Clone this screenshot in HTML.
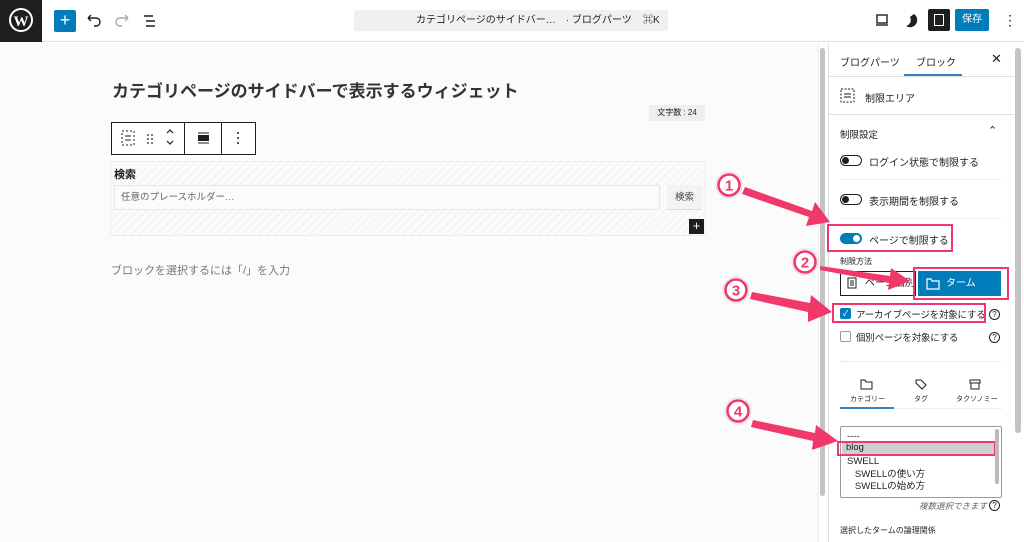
<!DOCTYPE html>
<html><head><meta charset="utf-8"><style>
*{box-sizing:border-box;margin:0;padding:0}
body{width:1024px;height:542px;overflow:hidden;background:#fff;font-family:"Liberation Sans","Noto Sans CJK JP",sans-serif;color:#1e1e1e;position:relative}
.a{position:absolute}
</style></head><body>
<div class="a" style="left:0;top:0;width:1024px;height:42px;background:#fff;border-bottom:1px solid #e0e0e0"></div>
<div class="a" style="left:0;top:0;width:42px;height:42px;background:#1e1e1e">
<svg width="42" height="42" viewBox="0 0 42 42"><circle cx="21" cy="20" r="11" fill="none" stroke="#fff" stroke-width="2"/><text x="21" y="26" font-size="15" font-family="Liberation Serif" font-weight="bold" fill="#fff" text-anchor="middle">W</text></svg></div>
<div class="a" style="left:54px;top:10px;width:22px;height:22px;background:#007cba;border-radius:2px;color:#fff;font-size:18px;line-height:21px;text-align:center">+</div>
<svg class="a" style="left:84px;top:12px" width="80" height="18"><path d="M4 6h8a4 4 0 0 1 0 8h-2M4 6l3-3M4 6l3 3" stroke="#1e1e1e" stroke-width="1.4" fill="none"/><path d="M44 6h-8a4 4 0 0 0 0 8h2M44 6l-3-3M44 6l-3 3" stroke="#aaa" stroke-width="1.4" fill="none"/><path d="M60 4h9M62 9h9M62 14h9" stroke="#1e1e1e" stroke-width="1.5"/></svg>
<div class="a" style="left:354px;top:10px;width:314px;height:21px;background:#f0f0f0;border-radius:2px;font-size:10px;line-height:21px"><span class="a" style="left:62px">カテゴリページのサイドバー…　· ブログパーツ</span><span class="a" style="left:289px">⌘K</span></div>
<svg class="a" style="left:874px;top:11px" width="60" height="20"><rect x="3" y="4" width="10" height="8" stroke="#1e1e1e" stroke-width="1.4" fill="none"/><path d="M2 14h12" stroke="#1e1e1e" stroke-width="1.4"/><path d="M40 3a7 7 0 1 1-8 12c4-1 6-5 4-9z" fill="#1e1e1e"/></svg>
<div class="a" style="left:928px;top:9px;width:22px;height:22px;background:#1e1e1e;border-radius:2px"><div class="a" style="left:6px;top:5px;width:10px;height:12px;border:1.5px solid #fff"></div></div>
<div class="a" style="left:955px;top:9px;width:34px;height:22px;background:#007cba;border-radius:2px;color:#fff;font-size:10px;line-height:22px;text-align:center">保存</div>
<div class="a" style="left:1003px;top:11px;font-size:14px;line-height:18px">⋮</div>
<div class="a" style="left:0;top:43px;width:828px;height:499px;background:#fbfbfb"></div>
<div class="a" style="left:112px;top:77px;font-size:17px;font-weight:bold;color:#333">カテゴリページのサイドバーで表示するウィジェット</div>
<div class="a" style="left:649px;top:105px;width:56px;height:16px;background:#eee;font-size:8px;line-height:16px;text-align:center">文字数 : 24</div>
<div class="a" style="left:111px;top:122px;width:145px;height:33px;border:1px solid #1e1e1e;background:#fff"></div>
<div class="a" style="left:184px;top:122px;width:1px;height:33px;background:#1e1e1e"></div>
<div class="a" style="left:221px;top:122px;width:1px;height:33px;background:#1e1e1e"></div>
<svg class="a" style="left:111px;top:122px" width="145" height="33"><rect x="11" y="9" width="12" height="14" stroke="#1e1e1e" stroke-dasharray="2 2" fill="none"/><path d="M14 14h6M14 18h6" stroke="#1e1e1e"/><g fill="#1e1e1e"><circle cx="37" cy="13" r=".9"/><circle cx="41" cy="13" r=".9"/><circle cx="37" cy="17" r=".9"/><circle cx="41" cy="17" r=".9"/><circle cx="37" cy="21" r=".9"/><circle cx="41" cy="21" r=".9"/></g><path d="M56 11l3-3 3 3M56 19l3 3 3-3" stroke="#1e1e1e" fill="none" stroke-width="1.2"/><path d="M87 11h11M87 21h11" stroke="#1e1e1e"/><rect x="87" y="13" width="11" height="6" fill="#1e1e1e"/><g fill="#1e1e1e"><circle cx="127" cy="11" r="1"/><circle cx="127" cy="16" r="1"/><circle cx="127" cy="21" r="1"/></g></svg>
<div class="a" style="left:110px;top:161px;width:596px;height:75px;border:1px solid #eee;background:repeating-linear-gradient(135deg,#fbfbfb 0 5px,#f0f0f0 5px 6px)"></div>
<div class="a" style="left:114px;top:166px;font-size:11px;font-weight:bold">検索</div>
<div class="a" style="left:114px;top:185px;width:546px;height:25px;border:1px solid #e6e6e6;background:#fbfbfb;font-size:9.5px;line-height:24px;padding-left:6px;color:#666">任意のプレースホルダー…</div>
<div class="a" style="left:667px;top:185px;width:35px;height:25px;background:#f3f3f3;border-bottom:1px solid #ddd;font-size:9.5px;line-height:25px;text-align:center;color:#444">検索</div>
<div class="a" style="left:689px;top:219px;width:15px;height:15px;background:#1e1e1e;color:#fff;font-size:13px;line-height:14px;text-align:center">+</div>
<div class="a" style="left:111px;top:262px;font-size:11px;color:#777">ブロックを選択するには「/」を入力</div>
<div class="a" style="left:818px;top:43px;width:9px;height:499px;background:#fff;border-left:1px solid #eee"></div>
<div class="a" style="left:820px;top:48px;width:5px;height:448px;background:#c3c3c3;border-radius:3px"></div>
<div class="a" style="left:828px;top:43px;width:196px;height:499px;background:#fff;border-left:1px solid #e0e0e0"></div>
<div class="a" style="left:1015px;top:48px;width:6px;height:385px;background:#c3c3c3;border-radius:3px"></div>
<div class="a" style="left:829px;top:76px;width:185px;height:1px;background:#e0e0e0"></div>
<div class="a" style="left:840px;top:54px;font-size:10px">ブログパーツ</div>
<div class="a" style="left:916px;top:54px;font-size:10px">ブロック</div>
<div class="a" style="left:904px;top:74px;width:58px;height:2px;background:#3582c4"></div>
<div class="a" style="left:991px;top:51px;font-size:13px">✕</div>
<svg class="a" style="left:839px;top:86px" width="20" height="20"><rect x="2" y="3" width="13" height="13" stroke="#1e1e1e" stroke-dasharray="2 1.5" fill="none"/><path d="M5 8h7M5 11h7" stroke="#1e1e1e"/></svg>
<div class="a" style="left:865px;top:90px;font-size:10px">制限エリア</div>
<div class="a" style="left:829px;top:114px;width:185px;height:1px;background:#e0e0e0"></div>
<div class="a" style="left:840px;top:127px;font-size:9.5px">制限設定</div>
<div class="a" style="left:988px;top:124px;font-size:11px">⌃</div>
<div class="a" style="left:840px;top:155px;width:22px;height:11px;border:1px solid #1e1e1e;border-radius:6px"><div class="a" style="left:1px;top:1px;width:7px;height:7px;background:#1e1e1e;border-radius:50%"></div></div>
<div class="a" style="left:869px;top:154px;font-size:10px">ログイン状態で制限する</div>
<div class="a" style="left:840px;top:179px;width:162px;height:1px;background:#eee"></div>
<div class="a" style="left:840px;top:194px;width:22px;height:11px;border:1px solid #1e1e1e;border-radius:6px"><div class="a" style="left:1px;top:1px;width:7px;height:7px;background:#1e1e1e;border-radius:50%"></div></div>
<div class="a" style="left:869px;top:193px;font-size:10px">表示期間を制限する</div>
<div class="a" style="left:840px;top:218px;width:162px;height:1px;background:#eee"></div>
<div class="a" style="left:840px;top:233px;width:22px;height:11px;background:#007cba;border-radius:6px"><div class="a" style="left:13px;top:2px;width:7px;height:7px;background:#fff;border-radius:50%"></div></div>
<div class="a" style="left:869px;top:232px;font-size:10px">ページで制限する</div>
<div class="a" style="left:827px;top:224px;width:126px;height:28px;border:2px solid #f0386b"></div>
<div class="a" style="left:840px;top:256px;font-size:8px">制限方法</div>
<div class="a" style="left:840px;top:271px;width:76px;height:25px;border:1px solid #1e1e1e;background:#fff;font-size:10px;line-height:24px;padding-left:24px">ページ個別</div>
<svg class="a" style="left:845px;top:276px" width="14" height="14"><rect x="3" y="2" width="8" height="10" stroke="#1e1e1e" fill="none"/><path d="M5 5h4M5 7h4M5 9h4" stroke="#1e1e1e"/></svg>
<div class="a" style="left:918px;top:271px;width:83px;height:25px;background:#007cba;color:#fff;font-size:10px;line-height:25px;padding-left:28px">ターム</div>
<svg class="a" style="left:926px;top:277px" width="14" height="13"><path d="M1 2h4l1 2h7v8H1z" stroke="#fff" fill="none" stroke-width="1.2"/></svg>
<div class="a" style="left:913px;top:267px;width:96px;height:33px;border:2px solid #f0386b"></div>
<div class="a" style="left:840px;top:308px;width:11px;height:11px;background:#007cba;border-radius:2px;color:#fff;font-size:8px;line-height:11px;text-align:center">✓</div>
<div class="a" style="left:856px;top:307px;font-size:9.5px;letter-spacing:-0.2px">アーカイブページを対象にする</div>
<div class="a" style="left:832px;top:303px;width:154px;height:20px;border:2px solid #f0386b"></div>
<div class="a" style="left:840px;top:331px;width:11px;height:11px;border:1px solid #999;border-radius:2px"></div>
<div class="a" style="left:856px;top:330px;font-size:9.5px;letter-spacing:-0.2px">個別ページを対象にする</div>
<div class="a" style="left:989px;top:309px;width:11px;height:11px;border:1.2px solid #1e1e1e;border-radius:50%;font-size:8px;line-height:9px;text-align:center">?</div>
<div class="a" style="left:989px;top:332px;width:11px;height:11px;border:1.2px solid #1e1e1e;border-radius:50%;font-size:8px;line-height:9px;text-align:center">?</div>
<div class="a" style="left:840px;top:361px;width:162px;border-top:1px dotted #ddd"></div>
<svg class="a" style="left:840px;top:377px" width="160" height="16"><path d="M21 3h4l1 2h6v7H21z" stroke="#1e1e1e" fill="none"/><path d="M76 3h5l5 5-4 4-6-6z" stroke="#1e1e1e" fill="none"/><rect x="130" y="3" width="10" height="3" stroke="#1e1e1e" fill="none"/><rect x="131" y="6" width="8" height="6" stroke="#1e1e1e" fill="none"/></svg>
<div class="a" style="left:850px;top:394px;font-size:7px">カテゴリー</div>
<div class="a" style="left:914px;top:394px;font-size:7px">タグ</div>
<div class="a" style="left:956px;top:394px;font-size:7px">タクソノミー</div>
<div class="a" style="left:840px;top:407px;width:54px;height:2px;background:#3582c4"></div>
<div class="a" style="left:894px;top:408px;width:108px;height:1px;background:#eee"></div>
<div class="a" style="left:840px;top:426px;width:162px;height:72px;border:1px solid #999;border-radius:2px;font-size:9.5px;line-height:12.5px;padding:4px 0 0 6px;overflow:hidden">----<br>blog<br>SWELL<br>&nbsp;&nbsp;&nbsp;SWELLの使い方<br>&nbsp;&nbsp;&nbsp;SWELLの始め方</div>
<div class="a" style="left:842px;top:443px;width:152px;height:12px;background:#cfcfcf"></div>
<div class="a" style="left:846px;top:442px;font-size:9.5px">blog</div>
<div class="a" style="left:837px;top:441px;width:159px;height:15px;border:2px solid #f0386b"></div>
<div class="a" style="left:995px;top:429px;width:4px;height:55px;background:#bbb;border-radius:2px"></div>
<div class="a" style="left:919px;top:500px;font-size:8.5px;font-style:italic;color:#666">複数選択できます</div>
<div class="a" style="left:989px;top:500px;width:11px;height:11px;border:1.2px solid #1e1e1e;border-radius:50%;font-size:8px;line-height:9px;text-align:center">?</div>
<div class="a" style="left:840px;top:525px;font-size:8px">選択したタームの論理関係</div>
<svg class="a" style="left:0;top:0" width="1024" height="542">
<g fill="#f0386b"><polygon points="745,187 812,211 815,202 830,222 806,226 809,217 742,194"/>
<polygon points="820,266 890,276 891,268 910,281 888,290 889,283 820,270"/>
<polygon points="752,292 810,303 811,295 832,312 808,322 808,312 750,299"/>
<polygon points="753,420 815,433 816,425 838,441 812,450 813,441 751,427"/></g>
<g fill="#fff" stroke="#ddd" stroke-width="1"><circle cx="729" cy="185" r="13"/><circle cx="805" cy="262" r="13"/><circle cx="736" cy="290" r="13"/><circle cx="738" cy="411" r="13"/></g>
<g fill="none" stroke="#f0386b" stroke-width="2.6"><circle cx="729" cy="185" r="10.5"/><circle cx="805" cy="262" r="10.5"/><circle cx="736" cy="290" r="10.5"/><circle cx="738" cy="411" r="10.5"/></g>
<g font-family="Liberation Sans,sans-serif" font-size="15" font-weight="bold" fill="#f0386b" text-anchor="middle"><text x="729" y="190.5">1</text><text x="805" y="267.5">2</text><text x="736" y="295.5">3</text><text x="738" y="416.5">4</text></g>
</svg>
</body></html>
